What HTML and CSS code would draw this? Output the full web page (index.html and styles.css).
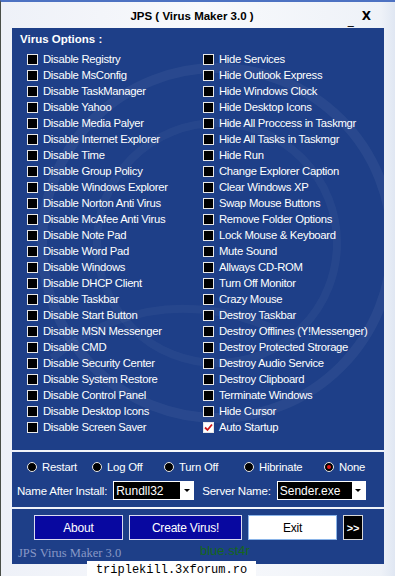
FILE: index.html
```html
<!DOCTYPE html>
<html>
<head>
<meta charset="utf-8">
<link rel="stylesheet" href="styles.css">
</head>
<body>
<div class="window">
  <div class="titlebar">
    <span class="title">JPS ( Virus Maker 3.0 )</span>
    <span class="ctrls"><span class="min">_</span><span class="close">X</span></span>
  </div>
  <div class="panel">
    <section class="options">
      <svg class="watermark" width="372" height="420" viewBox="0 0 372 420">
        <circle cx="205" cy="215" r="175" fill="none" stroke="#ffffff" stroke-opacity="0.05" stroke-width="10"/>
        <circle cx="205" cy="215" r="120" fill="none" stroke="#ffffff" stroke-opacity="0.04" stroke-width="8"/>
        <path d="M40 330 Q140 250 260 300" fill="none" stroke="#ffffff" stroke-opacity="0.04" stroke-width="8"/>
      </svg>
      <h2 class="heading">Virus Options :</h2>
      <div class="grid">
        <label class="opt"><span class="box"></span>Disable Registry</label>
        <label class="opt"><span class="box"></span>Hide Services</label>
        <label class="opt"><span class="box"></span>Disable MsConfig</label>
        <label class="opt"><span class="box"></span>Hide Outlook Express</label>
        <label class="opt"><span class="box"></span>Disable TaskManager</label>
        <label class="opt"><span class="box"></span>Hide Windows Clock</label>
        <label class="opt"><span class="box"></span>Disable Yahoo</label>
        <label class="opt"><span class="box"></span>Hide Desktop Icons</label>
        <label class="opt"><span class="box"></span>Disable Media Palyer</label>
        <label class="opt"><span class="box"></span>Hide All Proccess in Taskmgr</label>
        <label class="opt"><span class="box"></span>Disable Internet Explorer</label>
        <label class="opt"><span class="box"></span>Hide All Tasks in Taskmgr</label>
        <label class="opt"><span class="box"></span>Disable Time</label>
        <label class="opt"><span class="box"></span>Hide Run</label>
        <label class="opt"><span class="box"></span>Disable Group Policy</label>
        <label class="opt"><span class="box"></span>Change Explorer Caption</label>
        <label class="opt"><span class="box"></span>Disable Windows Explorer</label>
        <label class="opt"><span class="box"></span>Clear Windows XP</label>
        <label class="opt"><span class="box"></span>Disable Norton Anti Virus</label>
        <label class="opt"><span class="box"></span>Swap Mouse Buttons</label>
        <label class="opt"><span class="box"></span>Disable McAfee Anti Virus</label>
        <label class="opt"><span class="box"></span>Remove Folder Options</label>
        <label class="opt"><span class="box"></span>Disable Note Pad</label>
        <label class="opt"><span class="box"></span>Lock Mouse &amp; Keyboard</label>
        <label class="opt"><span class="box"></span>Disable Word Pad</label>
        <label class="opt"><span class="box"></span>Mute Sound</label>
        <label class="opt"><span class="box"></span>Disable Windows</label>
        <label class="opt"><span class="box"></span>Allways CD-ROM</label>
        <label class="opt"><span class="box"></span>Disable DHCP Client</label>
        <label class="opt"><span class="box"></span>Turn Off Monitor</label>
        <label class="opt"><span class="box"></span>Disable Taskbar</label>
        <label class="opt"><span class="box"></span>Crazy Mouse</label>
        <label class="opt"><span class="box"></span>Disable Start Button</label>
        <label class="opt"><span class="box"></span>Destroy Taskbar</label>
        <label class="opt"><span class="box"></span>Disable MSN Messenger</label>
        <label class="opt"><span class="box"></span>Destroy Offlines (Y!Messenger)</label>
        <label class="opt"><span class="box"></span>Disable CMD</label>
        <label class="opt"><span class="box"></span>Destroy Protected Strorage</label>
        <label class="opt"><span class="box"></span>Disable Security Center</label>
        <label class="opt"><span class="box"></span>Destroy Audio Service</label>
        <label class="opt"><span class="box"></span>Disable System Restore</label>
        <label class="opt"><span class="box"></span>Destroy Clipboard</label>
        <label class="opt"><span class="box"></span>Disable Control Panel</label>
        <label class="opt"><span class="box"></span>Terminate Windows</label>
        <label class="opt"><span class="box"></span>Disable Desktop Icons</label>
        <label class="opt"><span class="box"></span>Hide Cursor</label>
        <label class="opt"><span class="box"></span>Disable Screen Saver</label>
        <label class="opt"><span class="box checked"><svg width="9" height="9" viewBox="0 0 9 9"><path d="M1 4.5 L3.5 7 L8 1.5" fill="none" stroke="#d01818" stroke-width="1.8"/></svg></span>Auto Startup</label>
      </div>
    </section>
    <section class="settings">
      <div class="radios">
        <span class="radio"><span class="dot"></span>Restart</span>
        <span class="radio"><span class="dot"></span>Log Off</span>
        <span class="radio"><span class="dot"></span>Turn Off</span>
        <span class="radio"><span class="dot"></span>Hibrinate</span>
        <span class="radio"><span class="dot on"></span>None</span>
      </div>
      <div class="fields">
        <span class="flabel">Name After Install:</span>
        <span class="select s1"><span class="sval">Rundll32</span><span class="arrow"></span></span>
        <span class="flabel l2">Server Name:</span>
        <span class="select s2"><span class="sval">Sender.exe</span><span class="arrow"></span></span>
      </div>
    </section>
    <section class="actions">
      <div class="buttons">
        <span class="btn about">About</span>
        <span class="btn create">Create Virus!</span>
        <span class="btn exit">Exit</span>
        <span class="btn more">&gt;&gt;</span>
      </div>
      <div class="footer">
        <span class="brand">JPS Virus Maker 3.0</span>
        <span class="author">blue.st4r</span>
      </div>
    </section>
  </div>
  <div class="watermark-url">triplekill.3xforum.ro</div>
</div>
</body>
</html>
```

FILE: styles.css
```css
* { box-sizing: border-box; }
html, body { margin: 0; padding: 0; }
body {
  width: 395px;
  height: 576px;
  overflow: hidden;
  font-family: "Liberation Sans", Arial, sans-serif;
  background: #f3f5fa;
}
.window {
  width: 395px;
  height: 576px;
  border-top: 2px solid #4d72c2;
  border-left: 1px solid #4a4f48;
  background: linear-gradient(90deg, #eef1f8 0px, #f8f9fc 200px, #eef2f8 380px, #dfe6f2 395px);
  position: relative;
}
.titlebar {
  height: 26px;
  display: flex;
  align-items: center;
  justify-content: center;
  position: relative;
}
.title {
  font-family: "Liberation Sans", Arial, sans-serif;
  font-weight: bold;
  font-size: 11.5px;
  color: #000;
  margin-top: 2px;
  margin-right: 12px;
}
.ctrls {
  position: absolute;
  right: 24px;
  top: 7px;
  display: flex;
  gap: 8px;
  font-family: "DejaVu Sans", sans-serif;
  font-size: 12px;
  color: #000;
}
.min { margin-top: 4px; }
.close { font-weight: bold; }
.panel {
  margin-left: 11px;
  width: 372px;
}
section { background: #1e3f88; position: relative; }
.options {
  height: 422px;
  padding: 3px 0 0 8px;
  overflow: hidden;
}
.watermark { position: absolute; left: 0; top: 0; pointer-events: none; }
.heading {
  margin: 0;
  height: 20px;
  font-family: "Liberation Sans", Arial, sans-serif;
  font-weight: bold;
  font-size: 11.5px;
  line-height: 16px;
  color: #fff;
  position: relative;
}
.grid {
  display: grid;
  grid-template-columns: 176px 176px;
  grid-auto-rows: 16px;
  margin-left: 7px;
  position: relative;
}
.opt {
  display: flex;
  align-items: center;
  gap: 5px;
  color: #fff;
  font-size: 11.3px;
  letter-spacing: -0.3px;
  white-space: nowrap;
}
.box {
  width: 11px;
  height: 11px;
  flex: none;
  background: #000;
  border: 1px solid #e8e8e8;
  display: flex;
  align-items: center;
  justify-content: center;
}
.box.checked { background: #fff; border-color: #e8e8e8; }
.settings {
  margin-top: 2px;
  height: 55px;
  padding-top: 7px;
}
.radios {
  height: 16px;
  display: grid;
  grid-template-columns: 65px 72px 80px 80px 60px;
  padding-left: 15px;
}
.radio {
  display: flex;
  align-items: center;
  gap: 5px;
  color: #fff;
  font-size: 11.3px;
  letter-spacing: -0.2px;
}
.dot {
  width: 10px;
  height: 10px;
  border-radius: 50%;
  background: #000;
  border: 1px solid #e8e8e8;
  display: flex;
  align-items: center;
  justify-content: center;
}
.dot.on::after {
  content: "";
  width: 4px;
  height: 4px;
  border-radius: 50%;
  background: #e01818;
}
.fields {
  margin-top: 6px;
  display: flex;
  align-items: center;
  padding-left: 5px;
}
.flabel {
  color: #fff;
  font-size: 11.5px;
  letter-spacing: -0.2px;
}
.l2 { margin-left: 8px; }
.select {
  height: 19px;
  background: #000;
  border: 1px solid #fff;
  display: flex;
  align-items: center;
  justify-content: space-between;
  margin-left: 6px;
}
.s1 { width: 81px; }
.s2 { width: 89px; }
.sval {
  color: #fff;
  font-size: 12px;
  padding-left: 2px;
}
.arrow {
  width: 13px;
  height: 17px;
  background: #fff;
  display: flex;
  align-items: center;
  justify-content: center;
}
.arrow::after {
  content: "";
  border-left: 3px solid transparent;
  border-right: 3px solid transparent;
  border-top: 3px solid #000;
}
.actions {
  margin-top: 2px;
  height: 55px;
  padding-top: 6px;
}
.buttons {
  display: flex;
  gap: 6px;
  padding-left: 22px;
}
.btn {
  height: 25px;
  display: flex;
  align-items: center;
  justify-content: center;
  font-size: 12px;
  letter-spacing: -0.2px;
  color: #fff;
  background: #0808a0;
  border: 1px solid #dcdcf0;
}
.about { width: 89px; }
.create { width: 113px; }
.exit { width: 89px; background: #fff; color: #000; border-color: #8ab4e8; }
.more { width: 20px; background: #000; border-color: #d8d8d8; font-weight: bold; font-size: 11px; }
.footer {
  display: flex;
  align-items: center;
  height: 24px;
  padding-left: 6px;
}
.brand {
  font-family: "Liberation Serif", serif;
  font-size: 12.5px;
  color: #8898c6;
  width: 182px;
  flex: none;
  margin-top: 2px;
}
.author {
  font-family: "Liberation Sans", Arial, sans-serif;
  font-size: 13px;
  color: #16661c;
  margin-top: -4px;
  white-space: nowrap;
}
.watermark-url {
  position: absolute;
  left: 86px;
  top: 559px;
  width: 169px;
  height: 17px;
  background: #fff;
  font-family: "Liberation Mono", monospace;
  font-size: 12px;
  color: #000;
  text-align: center;
  line-height: 18px;
}
```
